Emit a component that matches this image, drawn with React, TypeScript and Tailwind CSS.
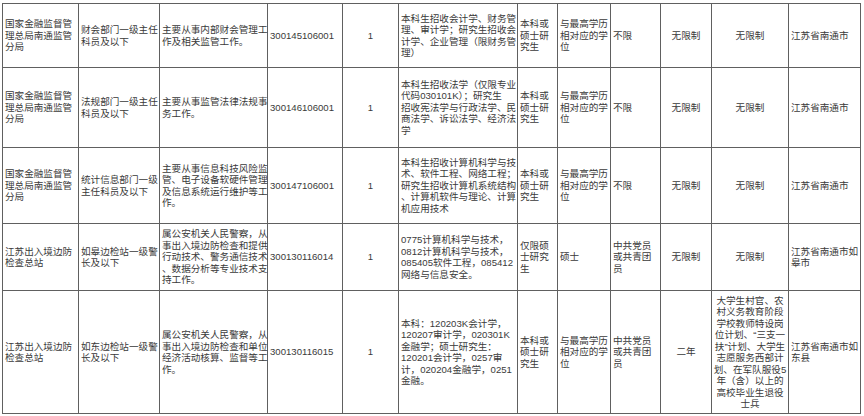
import React from "react";

type Cell = { lines: string[]; align?: "left" | "center" };

const L = (...lines: string[]): Cell => ({ lines });
const C = (...lines: string[]): Cell => ({ lines, align: "center" });

const org1 = L("国家金融监督管", "理总局南通监管", "分局");
const org2 = L("江苏出入境边防", "检查总站");
const edu = L("本科或", "硕士研", "究生");
const deg = L("与最高学历", "相对应的学", "位");
const party = L("中共党员", "或共青团", "员");

const rows: { h: string; cells: Cell[] }[] = [
  {
    h: "h-[64px]",
    cells: [
      org1,
      L("财会部门一级主任", "科员及以下"),
      L("主要从事内部财会管理工", "作及相关监管工作。"),
      L("300145106001"),
      C("1"),
      L("本科生招收会计学、财务管", "理、审计学；研究生招收会", "计学、企业管理（限财务管", "理）"),
      edu,
      deg,
      L("不限"),
      C("无限制"),
      C("无限制"),
      L("江苏省南通市"),
    ],
  },
  {
    h: "h-[80px]",
    cells: [
      org1,
      L("法规部门一级主任", "科员及以下"),
      L("主要从事监管法律法规事", "务工作。"),
      L("300146106001"),
      C("1"),
      L("本科生招收法学（仅限专业", "代码030101K）；研究生", "招收宪法学与行政法学、民", "商法学、诉讼法学、经济法", "学"),
      edu,
      deg,
      L("不限"),
      C("无限制"),
      C("无限制"),
      L("江苏省南通市"),
    ],
  },
  {
    h: "h-[76px]",
    cells: [
      org1,
      L("统计信息部门一级", "主任科员及以下"),
      L("主要从事信息科技风险监", "管、电子设备软硬件管理", "及信息系统运行维护等工", "作。"),
      L("300147106001"),
      C("1"),
      L("本科生招收计算机科学与技", "术、软件工程、网络工程；", "研究生招收计算机系统结构", "、计算机软件与理论、计算", "机应用技术"),
      edu,
      deg,
      L("不限"),
      C("无限制"),
      C("无限制"),
      L("江苏省南通市"),
    ],
  },
  {
    h: "h-[67px]",
    cells: [
      org2,
      L("如皋边检站一级警", "长及以下"),
      L("属公安机关人民警察，从", "事出入境边防检查和提供", "行动技术、警务通信技术", "、数据分析等专业技术支", "持工作。"),
      L("300130116014"),
      C("1"),
      L("0775计算机科学与技术，", "0812计算机科学与技术，", "085405软件工程，085412", "网络与信息安全。"),
      L("仅限硕", "士研究", "生"),
      L("硕士"),
      party,
      C("无限制"),
      C("无限制"),
      L("江苏省南通市如", "皋市"),
    ],
  },
  {
    h: "h-[123px]",
    cells: [
      org2,
      L("如东边检站一级警", "长及以下"),
      L("属公安机关人民警察，从", "事出入境边防检查和单位", "经济活动核算、监督等工", "作。"),
      L("300130116015"),
      C("1"),
      L("本科：120203K会计学，", "120207审计学，020301K", "金融学；硕士研究生：", "120201会计学，0257审", "计，020204金融学，0251", "金融。"),
      edu,
      deg,
      party,
      C("二年"),
      C(
        "大学生村官、农",
        "村义务教育阶段",
        "学校教师特设岗",
        "位计划、“三支一",
        "扶”计划、大学生",
        "志愿服务西部计",
        "划、在军队服役5",
        "年（含）以上的",
        "高校毕业生退役",
        "士兵"
      ),
      L("江苏省南通市如", "东县"),
    ],
  },
];

export default function App() {
  return (
    <div
      className="w-[864px] h-[416px] bg-white overflow-hidden pt-[3px] pl-[2px]"
      style={{ fontFamily: '"Liberation Sans", "Noto Sans CJK SC", sans-serif' }}
    >
      <table className="table-fixed border-collapse w-[859px] text-[9.6px] leading-[11.5px] text-[#3a3a3a]">
        <colgroup>
          <col className="w-[76px]" />
          <col className="w-[81px]" />
          <col className="w-[108px]" />
          <col className="w-[75px]" />
          <col className="w-[56px]" />
          <col className="w-[119px]" />
          <col className="w-[40px]" />
          <col className="w-[53px]" />
          <col className="w-[50px]" />
          <col className="w-[51px]" />
          <col className="w-[77px]" />
          <col className="w-[72px]" />
        </colgroup>
        <tbody>
          {rows.map((r, i) => (
            <tr key={i} className={r.h}>
              {r.cells.map((c, j) => (
                <td
                  key={j}
                  className={
                    c.align === "center"
                      ? "border border-[#606060] px-[1px] py-0 align-middle text-center"
                      : "border border-[#606060] pl-[2px] pr-0 py-0 align-middle text-left"
                  }
                >
                  {c.lines.map((line, k) => (
                    <div key={k} className="whitespace-nowrap">
                      {line}
                    </div>
                  ))}
                </td>
              ))}
            </tr>
          ))}
        </tbody>
      </table>
    </div>
  );
}
